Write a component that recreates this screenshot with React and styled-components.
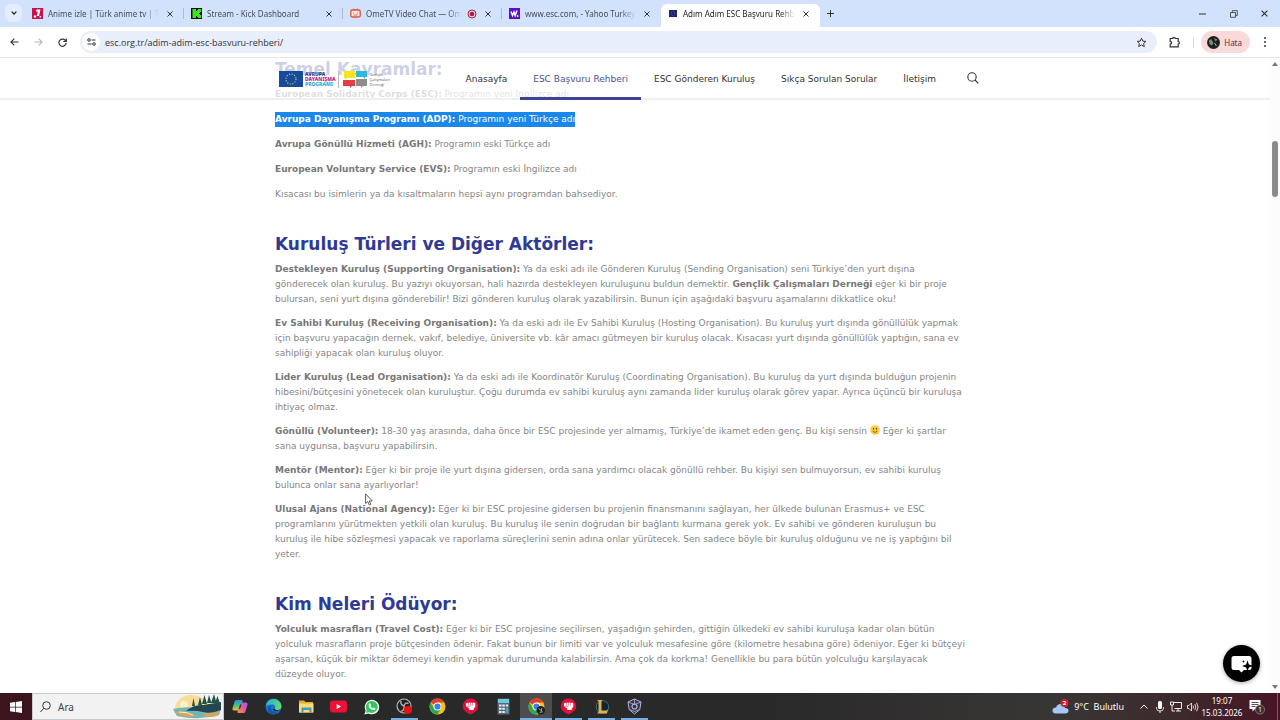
import styled, { createGlobalStyle } from "styled-components";

const GlobalStyle = createGlobalStyle`
  * {
    box-sizing: border-box;
  }
  body {
    margin: 0;
    background: #fff;
  }
  button, input {
    font: inherit;
    color: inherit;
    border: none;
    background: none;
    padding: 0;
    margin: 0;
  }
  svg {
    display: block;
    flex-shrink: 0;
  }
`;

const Screen = styled.div`
  height: 100vh;
  display: flex;
  flex-direction: column;
  overflow: hidden;
  font-family: "Noto Sans", sans-serif;
  font-size: 8px;
  color: #333;
`;

/* browser */

const TabStrip = styled.div`
  height: 27px;
  display: flex;
  align-items: flex-end;
  background: #d3e2fc;
  padding-left: 5px;
`;

const TabSearch = styled.button`
  width: 17px;
  height: 18px;
  margin: 0 3px 5px 0;
  border-radius: 6px;
  background: #e4edfd;
  display: flex;
  align-items: center;
  justify-content: center;
`;

const Tab = styled.div`
  flex: 0 1 159px;
  min-width: 0;
  height: 23px;
  display: flex;
  align-items: center;
  gap: 5px;
  padding: 0 8px 4px 7px;
  position: relative;
  border-radius: 6px 6px 0 0;
  background: ${(p) => (p.$active ? "#fff" : "transparent")};
  color: ${(p) => (p.$active ? "#222" : "#454b57")};
  &::after {
    content: "";
    position: absolute;
    right: 0;
    top: 4px;
    width: 1px;
    height: 11px;
    background: ${(p) => (p.$line ? "#a9bbdc" : "transparent")};
  }
`;

const TabTitle = styled.span`
  flex: 1;
  min-width: 0;
  overflow: hidden;
  white-space: nowrap;
  line-height: 14px;
  mask-image: linear-gradient(90deg, #000 86%, transparent);
`;

const IconButton = styled.button`
  width: ${(p) => p.$w || 12}px;
  height: ${(p) => p.$h || 14}px;
  display: flex;
  align-items: center;
  justify-content: center;
`;

const NewTab = styled(IconButton)`
  margin-bottom: 7px;
`;

const WindowButtons = styled.div`
  margin-left: auto;
  display: flex;
  height: 27px;
`;

const Toolbar = styled.div`
  height: 31px;
  display: flex;
  align-items: center;
  background: #fff;
  border-bottom: 1px solid #e3e5ea;
  padding: 0 0 0 2px;
`;

const Omnibox = styled.label`
  flex: 1;
  height: 22px;
  margin: 0 7px 0 6px;
  padding: 0 7px 0 2px;
  border-radius: 11px;
  background: #e9effa;
  display: flex;
  align-items: center;
  gap: 5px;
`;

const SiteInfo = styled.button`
  width: 18px;
  height: 18px;
  border-radius: 50%;
  background: #fff;
  display: flex;
  align-items: center;
  justify-content: center;
`;

const Address = styled.input`
  flex: 1;
  font-family: "Open Sans", sans-serif;
  font-size: 9px;
  color: #30343b;
  outline: none;
`;

const Divider = styled.span`
  width: 1px;
  height: 11px;
  margin: 0 7px;
  background: #cddaf0;
`;

const Profile = styled.button`
  height: 22px;
  border-radius: 11px;
  padding: 0 8px 0 6px;
  background: #f9dadb;
  color: #6d2a2c;
  display: flex;
  align-items: center;
  gap: 4px;
`;

/* page */

const Viewport = styled.div`
  flex: 1;
  min-height: 0;
  display: flex;
  position: relative;
  overflow: hidden;
  font-family: "DejaVu Sans", Verdana, sans-serif;
  font-size: 9px;
`;

const Page = styled.div`
  flex: 1;
  min-width: 0;
  position: relative;
`;

const SiteHeader = styled.header`
  position: absolute;
  inset: 0 0 auto 0;
  height: 42px;
  background: rgba(255, 255, 255, 0.76);
  border-bottom: 2px solid rgba(238, 238, 238, 0.9);
`;

const HeaderInner = styled.div`
  max-width: 712px;
  height: 42px;
  margin: 0 auto;
  display: flex;
  align-items: stretch;
`;

const Logo = styled.a`
  display: flex;
  align-items: center;
  gap: 2px;
  margin-right: auto;
  text-decoration: none;
`;

const LogoText = styled.span`
  display: flex;
  flex-direction: column;
  font-family: ${(p) => (p.$light ? '"Open Sans"' : '"Noto Sans"')}, sans-serif;
  font-size: ${(p) => (p.$light ? 4 : 5)}px;
  font-weight: ${(p) => (p.$light ? 400 : 800)};
  line-height: 5px;
  color: #555;
`;

const LogoLine = styled.span`
  color: ${(p) => p.$color};
`;

const LogoRule = styled.span`
  width: 1px;
  height: 17px;
  margin-right: 2px;
  background: #bbb;
`;

const Nav = styled.nav`
  display: flex;
`;

const NavLink = styled.a`
  display: flex;
  align-items: center;
  padding: 0 13px;
  white-space: nowrap;
  text-decoration: none;
  color: ${(p) => (p.$active ? "#4b4f9c" : "#333")};
  border-bottom: 3px solid ${(p) => (p.$active ? "#3c4296" : "transparent")};
  border-top: 2px solid transparent;
`;

const SearchButton = styled(IconButton)`
  height: 40px;
  margin: 0 12px 0 18px;
`;

const Article = styled.main`
  max-width: 720px;
  margin: 0 auto;
  color: #858585;
  line-height: 15px;
`;

const Section = styled.section`
  margin-bottom: 31px;
  & p {
    margin-bottom: ${(p) => (p.$loose ? 10 : 9)}px;
  }
`;

const Heading = styled.h2`
  margin: 0 0 7px;
  font-size: 17px;
  line-height: 22px;
  color: #2f3a96;
`;

const Paragraph = styled.p`
  margin: 0;
  white-space: nowrap;
  & b {
    color: #777;
  }
`;

const Selected = styled.mark`
  display: inline-block;
  background: #1a87ec;
  color: #fff;
  & b {
    color: #fff;
  }
`;

const Smile = styled.svg`
  display: inline-block;
  vertical-align: -1px;
`;

const Pointer = styled.svg`
  position: absolute;
  left: 365px;
  top: 435px;
`;

const ChatButton = styled.button`
  position: absolute;
  right: 20px;
  bottom: 11px;
  width: 37px;
  height: 37px;
  border-radius: 50%;
  background: #000;
  box-shadow: 0 1px 4px rgba(0, 0, 0, 0.35);
  display: flex;
  align-items: center;
  justify-content: center;
`;

const Scrollbar = styled.div`
  width: 10px;
  background: #fcfcfc;
  display: flex;
  flex-direction: column;
  align-items: center;
  padding: 4px 0;
`;

const Track = styled.div`
  flex: 1;
  padding-top: 75px;
`;

const Thumb = styled.div`
  width: 6px;
  height: 56px;
  border-radius: 3px;
  background: #8b8b8b;
`;

/* taskbar */

const Taskbar = styled.div`
  height: 27px;
  display: flex;
  background: linear-gradient(90deg, #2a2929 0%, #2a2929 60%, #383635 82%, #3d2a2b 92%, #481426 100%);
  color: #fff;
`;

const StartButton = styled.button`
  width: 32px;
  background: #3c141d;
  display: flex;
  align-items: center;
  justify-content: center;
`;

const SearchBox = styled.label`
  width: 192px;
  background: #f2f2f2;
  border: 1px solid #c9c9c9;
  display: flex;
  align-items: center;
  padding: 0 1px 0 7px;
  gap: 7px;
`;

const SearchInput = styled.input`
  flex: 1;
  min-width: 0;
  font-size: 10px;
  outline: none;
  &::placeholder {
    color: #444;
    opacity: 1;
  }
`;

const AppList = styled.div`
  width: 427px;
  display: grid;
  grid-template-columns: repeat(13, 1fr);
`;

const AppButton = styled.button`
  display: flex;
  align-items: center;
  justify-content: center;
  position: relative;
  background: ${(p) => (p.$active ? "#4d4d4d" : "transparent")};
  &::after {
    content: "";
    position: absolute;
    inset: auto ${(p) => (p.$active ? 0 : 3)}px 0;
    height: 2px;
    background: ${(p) => (p.$open ? "#76aee6" : "transparent")};
  }
`;

const Tray = styled.div`
  margin-left: auto;
  display: flex;
  align-items: center;
  padding-right: 2px;
`;

const Weather = styled.button`
  display: flex;
  align-items: center;
  gap: 5px;
  font-size: 9px;
  white-space: pre;
  margin-right: 12px;
`;

const Clock = styled.div`
  width: 42px;
  text-align: center;
  line-height: 12px;
`;

const TrayEnd = styled.span`
  width: 1px;
  height: 27px;
  background: #7d5a64;
  margin-left: 6px;
`;

const Cross = ({ size = 6 }) => (
  <svg width={size} height={size} viewBox="0 0 6 6" stroke="#333" strokeWidth="1">
    <path d="M.5 .5l5 5M5.5 .5l-5 5" />
  </svg>
);

const tabs = [
  {
    title: "Anime izle | Türk anime tv | Türkçe",
    icon: (
      <svg width="11" height="11" viewBox="0 0 11 11">
        <rect width="11" height="11" fill="#c8124b" />
        <path d="M4.500 1.500h4L7 8H4.800L5.800 3.500H4zM2 7.500h2.300L4 9.500H1.600zM7.600 8h1.500v1.500H7.600z" fill="#fff" />
      </svg>
    ),
    line: true,
  },
  {
    title: "Stream - Kick Dashboard",
    icon: (
      <svg width="11" height="11" viewBox="0 0 11 11">
        <rect width="11" height="11" fill="#111" />
        <path d="M1.500 1h3.500v2H6V2h1V1h3v3H9v1H8v1h1v1h1v3H7V9H6V8H5v2H1.500z" fill="#3ee51c" />
      </svg>
    ),
    line: true,
  },
  {
    title: "OmeTV Video Chat — OmeTV",
    icon: (
      <svg width="11" height="11" viewBox="0 0 11 11" fill="none" stroke="#d9533c">
        <rect x=".8" y="2" width="9.400" height="7" rx="1.500" strokeWidth="1.300" fill="#fbe6df" />
        <path d="M3.500 .5l1.500 1.500M7.500 .5L6 2M3 5h1M7 5h1M3.500 7h4" strokeWidth=".8" />
      </svg>
    ),
    recording: true,
    line: true,
  },
  {
    title: "www.esc.com, - Yahoo Turkey Arama",
    icon: (
      <svg width="11" height="11" viewBox="0 0 11 11">
        <rect width="11" height="11" fill="#5a10c8" />
        <path d="M2 3.500l1.500 4L5 4l1.200 3.500L8 2.500" fill="none" stroke="#fff" strokeWidth="1.500" />
        <circle cx="8.700" cy="8" r=".9" fill="#fff" />
      </svg>
    ),
  },
  {
    title: "Adım Adım ESC Başvuru Rehberi",
    icon: (
      <svg width="10" height="11" viewBox="0 0 10 11">
        <rect x="1" y="2" width="8" height="7" fill="#1d2374" />
        <circle cx="5" cy="5.500" r="2" fill="none" stroke="#7378a0" strokeWidth=".7" strokeDasharray=".7 .7" />
      </svg>
    ),
    active: true,
  },
];

const ChromeLogo = ({ children }) => (
  <svg width="17" height="17" viewBox="0 0 16 16">
    <circle cx="8" cy="8" r="7.500" fill="#fbc116" />
    <path d="M8 8L1.500 4.250A7.500 7.500 0 0 1 14.500 4.250H8z" fill="#e33b2e" />
    <path d="M1.500 4.250A7.500 7.500 0 0 0 8 15.500L11.200 9.800 8 8 4.800 9.800z" fill="#2da94f" />
    <circle cx="8" cy="8" r="3.700" fill="#fff" />
    <circle cx="8" cy="8" r="2.900" fill="#3f7fe8" />
    {children}
  </svg>
);

const FistLogo = () => (
  <svg width="17" height="17" viewBox="0 0 17 17">
    <path d="M8.500 .6a7.800 7.600 0 0 1 6.500 11.600Q12 15 8.500 16.400 5 15 2 12.200A7.800 7.600 0 0 1 8.500 .6z" fill="#e0123c" />
    <path d="M3.800 5.500l2.200-.8h6.500l.8.700v3.400l-1.300 1.400-.4 1.800H7.200L6.800 10 4.300 8.500z" fill="#fff" />
    <path d="M6.400 5v2.500M8.500 4.700v2.800M10.600 4.700v2.800M5 8.300h3.500" stroke="#e0123c" strokeWidth=".5" />
  </svg>
);

const apps = [
  {
    name: "Copilot",
    icon: (
      <svg width="16" height="15" viewBox="0 0 16 15">
        <defs>
          <linearGradient id="cpa" x1="0" y1="0" x2="0" y2="1">
            <stop offset="0" stopColor="#2c8df0" />
            <stop offset=".5" stopColor="#36c486" />
            <stop offset="1" stopColor="#f0c22c" />
          </linearGradient>
          <linearGradient id="cpb" x1="1" y1="0" x2="0" y2="1">
            <stop offset="0" stopColor="#9b5cf2" />
            <stop offset=".5" stopColor="#e7569c" />
            <stop offset="1" stopColor="#f79a3e" />
          </linearGradient>
        </defs>
        <path d="M4.500 1h5q1.500 0 1 1.500L8 10q-.5 1.500-2 1.500H2Q0 11.500.6 9L2.600 2.500Q3 1 4.500 1z" fill="url(#cpa)" />
        <path d="M11.500 14h-5Q5 14 5.500 12.500L8 5q.5-1.500 2-1.500h4q2 0 1.400 2.500l-2 6.500q-.4 1.500-1.900 1.500z" fill="url(#cpb)" />
        <path d="M8.800 5.500L7.400 9.800" stroke="#333" strokeWidth="1.300" />
      </svg>
    ),
  },
  {
    name: "Edge",
    icon: (
      <svg width="17" height="17" viewBox="0 0 17 17">
        <defs>
          <linearGradient id="edg" x1="0" y1="0" x2="1" y2=".4">
            <stop offset="0" stopColor="#28a8e6" />
            <stop offset="1" stopColor="#5fdc6c" />
          </linearGradient>
        </defs>
        <circle cx="8.500" cy="8.500" r="8" fill="#1673cf" />
        <path d="M.6 8A8 8 0 0 1 16.500 8.500c0 2.500-2 3.500-4 3.500-2 0-3-.8-2.600-1.600.8-1.200.4-3.900-2.600-3.900C4.500 6.500 1.500 7 .6 8z" fill="url(#edg)" />
        <path d="M5.800 9.500c0 4 3.500 5.500 7.500 4-2 3-5.500 3.500-8 2.200C1.500 13 2.500 8 6.800 7.500c-.7.500-1 1.200-1 2z" fill="#1557a8" />
        <path d="M9.800 10.600c-.5.800.7 1.500 2.700 1.400 1.500 0 2.500-.5 3.500-1.300-1.500 2.800-7.500 3.500-8.500.6z" fill="#292929" />
      </svg>
    ),
  },
  {
    name: "Dosya Gezgini",
    icon: (
      <svg width="15" height="13" viewBox="0 0 15 13">
        <path d="M0 .5h5l1.500 1.500H14v10.500H0z" fill="#e8a932" />
        <path d="M0 3.500h14.500v9H0z" fill="#fbdc74" />
        <path d="M2.500 7.500h10v5H10.500V10h-6v2.500h-2z" fill="#3f9ad3" />
      </svg>
    ),
  },
  {
    name: "YouTube",
    icon: (
      <svg width="17" height="13" viewBox="0 0 17 13">
        <rect y=".5" width="17" height="12" rx="3" fill="#ee1136" />
        <path d="M6.700 4v5l4.300-2.500z" fill="#fff" />
      </svg>
    ),
  },
  {
    name: "WhatsApp",
    icon: (
      <svg width="16" height="16" viewBox="0 0 16 16">
        <path d="M.5 15.500L1.600 11.500A7.200 7.200 0 1 1 4.500 14.400z" fill="#fff" />
        <path d="M2 14l.7-2.800A6 6 0 1 1 5 13.300z" fill="#35c45c" />
        <path d="M5.200 4.500l1-.1.900 1.900-.6.900q.8 1.500 2.200 2.100l.9-.9 1.900.9q0 1.800-1.800 1.900Q5 10.500 4.600 6q0-1 .6-1.500z" fill="#fff" />
      </svg>
    ),
  },
  {
    name: "OBS",
    open: true,
    icon: (
      <svg width="17" height="17" viewBox="0 0 17 17">
        <circle cx="8" cy="8" r="7" fill="#222" stroke="#b9b9b9" strokeWidth="1.200" />
        <path d="M8 8Q4 6.500 5 3M8 8q1-4 4.500-2.500M8 8q1 4-3 5.500" fill="none" stroke="#aaa" strokeWidth="1.500" />
        <circle cx="12" cy="12" r="4" fill="#ec1010" />
      </svg>
    ),
  },
  { name: "Chrome", icon: <ChromeLogo /> },
  { name: "Riot", icon: <FistLogo /> },
  {
    name: "Hesap Makinesi",
    icon: (
      <svg width="13" height="17" viewBox="0 0 13 17">
        <rect x=".5" y=".5" width="12" height="16" fill="#5b666d" />
        <rect x="1" y="1" width="11" height="4" fill="#68cbe0" />
        <path d="M2 6.500h2.500v2H2zM5.300 6.500h2.500v2H5.300zM2 9.700h2.500v2H2zM5.300 9.700h2.500v2H5.300zM2 13h2.500v2H2zM5.300 13h2.500v2H5.300zM8.700 6.500h2.500v2H8.700z" fill="#e5edf0" />
        <path d="M8.700 9.700h2.500V15H8.700z" fill="#4aa0d8" />
      </svg>
    ),
  },
  {
    name: "Chrome profili",
    open: true,
    active: true,
    icon: (
      <ChromeLogo>
        <circle cx="12" cy="11.500" r="4" fill="#1b1b1b" />
        <path d="M10 10l2 1.500M13 9.500l-.5 3M11 13.500l3-.5" stroke="#b6bab4" strokeWidth=".9" />
      </ChromeLogo>
    ),
  },
  { name: "Riot Client", open: true, icon: <FistLogo /> },
  {
    name: "League of Legends",
    open: true,
    icon: (
      <svg width="16" height="16" viewBox="0 0 16 16">
        <circle cx="8.500" cy="8" r="6.300" fill="#13252d" stroke="#36707c" />
        <path d="M3 1h5.500L7.500 2.500v9h5L14 10l-1 4.500H3L4.500 13V2.500z" fill="#dcae55" />
      </svg>
    ),
  },
  {
    name: "Oyun",
    open: true,
    icon: (
      <svg width="17" height="17" viewBox="0 0 17 17" fill="none" stroke="#b4b4d6">
        <path d="M8.500 1l6.500 3-1.200 7.500L8.500 16l-5.300-4.500L2 4z" fill="#34344d" />
        <path d="M2 4l6.500 2.500L15 4M8.500 1v5.500M3.200 11.500l5.300 2 5.300-2" strokeWidth=".8" />
        <circle cx="8.500" cy="8.500" r="2.500" strokeWidth="1.200" />
      </svg>
    ),
  },
];

const App = () => {
  return (
    <Screen>
      <GlobalStyle />
      <TabStrip>
        <TabSearch aria-label="Sekmelerde ara">
          <svg width="6" height="4" viewBox="0 0 6 4" fill="none" stroke="#222" strokeWidth="1.300">
            <path d="M.6 .6L3 3 5.400 .6" />
          </svg>
        </TabSearch>
        {tabs.map((t) => (
          <Tab key={t.title} $active={t.active} $line={t.line}>
            {t.icon}
            <TabTitle>{t.title}</TabTitle>
            {t.recording && (
              <svg width="10" height="10" viewBox="0 0 10 10">
                <circle cx="5" cy="5" r="4" fill="none" stroke="#b3173a" />
                <circle cx="5" cy="5" r="2.300" fill="#b3173a" />
              </svg>
            )}
            <IconButton aria-label="Kapat">
              <Cross />
            </IconButton>
          </Tab>
        ))}
        <NewTab $w={20} aria-label="Yeni sekme">
          <svg width="7" height="7" viewBox="0 0 7 7" stroke="#333">
            <path d="M3.500 0v7M0 3.500h7" />
          </svg>
        </NewTab>
        <WindowButtons>
          <IconButton $w={31} $h={27} aria-label="Simge durumuna küçült">
            <svg width="7" height="2" viewBox="0 0 7 2" stroke="#333">
              <path d="M0 1h7" />
            </svg>
          </IconButton>
          <IconButton $w={31} $h={27} aria-label="Önceki boyut">
            <svg width="8" height="8" viewBox="0 0 8 8" fill="none" stroke="#333" strokeWidth=".8">
              <path d="M.5 2.500h5v4.800h-5zM2.300 2.300V.6h5v4.800H5.700" />
            </svg>
          </IconButton>
          <IconButton $w={31} $h={27} aria-label="Pencereyi kapat">
            <Cross size={7} />
          </IconButton>
        </WindowButtons>
      </TabStrip>

      <Toolbar>
        <IconButton $w={24} aria-label="Geri">
          <svg width="9" height="8" viewBox="0 0 9 8" fill="none" stroke="#333" strokeWidth="1.100">
            <path d="M8.500 4H1M4.300 .6L.9 4l3.400 3.400" />
          </svg>
        </IconButton>
        <IconButton $w={24} aria-label="İleri">
          <svg width="9" height="8" viewBox="0 0 9 8" fill="none" stroke="#b5b5b5" strokeWidth="1.100">
            <path d="M.5 4H8M4.700 .6L8.100 4 4.700 7.400" />
          </svg>
        </IconButton>
        <IconButton $w={24} aria-label="Yenile">
          <svg width="9" height="9" viewBox="0 0 9 9" fill="none" stroke="#333" strokeWidth="1.200">
            <path d="M7.800 3.200A3.600 3.600 0 1 0 8.100 5M8.300 .5v3H5.300" />
          </svg>
        </IconButton>
        <Omnibox>
          <SiteInfo aria-label="Site bilgileri">
            <svg width="9" height="8" viewBox="0 0 9 8" fill="none" stroke="#333">
              <circle cx="2" cy="2" r="1.300" />
              <path d="M4.500 2h4M.5 6h4" />
              <circle cx="7" cy="6" r="1.300" />
            </svg>
          </SiteInfo>
          <Address aria-label="Adres" defaultValue="esc.org.tr/adim-adim-esc-basvuru-rehberi/" />
          <IconButton $w={18} aria-label="Yer işareti">
            <svg width="11" height="11" viewBox="0 0 11 11" fill="none" stroke="#333">
              <path d="M5.500 1.200l1.300 2.900 3.100.3-2.300 2.100.7 3.100-2.800-1.600-2.800 1.600.7-3.100L1.100 4.400l3.100-.3z" />
            </svg>
          </IconButton>
        </Omnibox>
        <IconButton $w={22} aria-label="Uzantılar">
          <svg width="12" height="12" viewBox="0 0 12 12" fill="none" stroke="#333" strokeWidth="1.200">
            <path d="M1.200 2.500h2.600a1.200 1.200 0 0 1 2.400 0h3v3a1.200 1.200 0 0 1 0 2.400v3h-8V8.200a1.400 1.400 0 0 0 0-2.800z" />
          </svg>
        </IconButton>
        <Divider />
        <Profile>
          <svg width="13" height="13" viewBox="0 0 13 13">
            <circle cx="6.500" cy="6.500" r="6.500" fill="#1d211d" />
            <path d="M2 4.500L4 3l2.500 4L5 9.500 2.500 8zM7 2l3.500 1.500-2 2z" fill="#7d8a80" />
            <path d="M7.500 7l2 3" stroke="#aab1a8" />
          </svg>
          Hata
        </Profile>
        <IconButton $w={30} aria-label="Menü">
          <svg width="2" height="10" viewBox="0 0 2 10" fill="#333">
            <circle cx="1" cy="1" r="1" />
            <circle cx="1" cy="5" r="1" />
            <circle cx="1" cy="9" r="1" />
          </svg>
        </IconButton>
      </Toolbar>

      <Viewport>
        <Page>
          <Article>
            <Section $loose>
              <Heading>Temel Kavramlar:</Heading>
              <Paragraph>
                <b>European Solidarity Corps (ESC):</b> Programın yeni İngilizce adı
              </Paragraph>
              <Paragraph>
                <Selected>
                  <b>Avrupa Dayanışma Programı (ADP):</b> Programın yeni Türkçe adı
                </Selected>
              </Paragraph>
              <Paragraph>
                <b>Avrupa Gönüllü Hizmeti (AGH):</b> Programın eski Türkçe adı
              </Paragraph>
              <Paragraph>
                <b>European Voluntary Service (EVS):</b> Programın eski İngilizce adı
              </Paragraph>
              <Paragraph>Kısacası bu isimlerin ya da kısaltmaların hepsi aynı programdan bahsediyor.</Paragraph>
            </Section>

            <Section>
              <Heading>Kuruluş Türleri ve Diğer Aktörler:</Heading>
              <Paragraph>
                <b>Destekleyen Kuruluş (Supporting Organisation):</b> Ya da eski adı ile Gönderen Kuruluş (Sending
                Organisation) seni Türkiye’den yurt dışına
                <br />
                gönderecek olan kuruluş. Bu yazıyı okuyorsan, hali hazırda destekleyen kuruluşunu buldun demektir.{" "}
                <b>Gençlik Çalışmaları Derneği</b> eğer ki bir proje
                <br />
                bulursan, seni yurt dışına gönderebilir! Bizi gönderen kuruluş olarak yazabilirsin. Bunun için aşağıdaki
                başvuru aşamalarını dikkatlice oku!
              </Paragraph>
              <Paragraph>
                <b>Ev Sahibi Kuruluş (Receiving Organisation):</b> Ya da eski adı ile Ev Sahibi Kuruluş (Hosting
                Organisation). Bu kuruluş yurt dışında gönüllülük yapmak
                <br />
                için başvuru yapacağın dernek, vakıf, belediye, üniversite vb. kâr amacı gütmeyen bir kuruluş olacak.
                Kısacası yurt dışında gönüllülük yaptığın, sana ev
                <br />
                sahipliği yapacak olan kuruluş oluyor.
              </Paragraph>
              <Paragraph>
                <b>Lider Kuruluş (Lead Organisation):</b> Ya da eski adı ile Koordinatör Kuruluş (Coordinating
                Organisation). Bu kuruluş da yurt dışında bulduğun projenin
                <br />
                hibesini/bütçesini yönetecek olan kuruluştur. Çoğu durumda ev sahibi kuruluş aynı zamanda lider kuruluş
                olarak görev yapar. Ayrıca üçüncü bir kuruluşa
                <br />
                ihtiyaç olmaz.
              </Paragraph>
              <Paragraph>
                <b>Gönüllü (Volunteer):</b> 18-30 yaş arasında, daha önce bir ESC projesinde yer almamış, Türkiye’de
                ikamet eden genç. Bu kişi sensin{" "}
                <Smile width="10" height="10" viewBox="0 0 10 10" role="img" aria-label="gülümseme">
                  <circle cx="5" cy="5" r="4.800" fill="#fbcb3c" />
                  <ellipse cx="3.500" cy="3.700" rx=".6" ry="1" fill="#5b3c12" />
                  <ellipse cx="6.500" cy="3.700" rx=".6" ry="1" fill="#5b3c12" />
                  <path d="M2.800 6.300Q5 8.500 7.200 6.300" fill="none" stroke="#5b3c12" strokeWidth=".8" />
                </Smile>{" "}
                Eğer ki şartlar
                <br />
                sana uygunsa, başvuru yapabilirsin.
              </Paragraph>
              <Paragraph>
                <b>Mentör (Mentor):</b> Eğer ki bir proje ile yurt dışına gidersen, orda sana yardımcı olacak gönüllü
                rehber. Bu kişiyi sen bulmuyorsun, ev sahibi kuruluş
                <br />
                bulunca onlar sana ayarlıyorlar!
              </Paragraph>
              <Paragraph>
                <b>Ulusal Ajans (National Agency):</b> Eğer ki bir ESC projesine gidersen bu projenin finansmanını
                sağlayan, her ülkede bulunan Erasmus+ ve ESC
                <br />
                programlarını yürütmekten yetkili olan kuruluş. Bu kuruluş ile senin doğrudan bir bağlantı kurmana gerek
                yok. Ev sahibi ve gönderen kuruluşun bu
                <br />
                kuruluş ile hibe sözleşmesi yapacak ve raporlama süreçlerini senin adına onlar yürütecek. Sen sadece
                böyle bir kuruluş olduğunu ve ne iş yaptığını bil
                <br />
                yeter.
              </Paragraph>
            </Section>

            <Section>
              <Heading>Kim Neleri Ödüyor:</Heading>
              <Paragraph>
                <b>Yolculuk masrafları (Travel Cost):</b> Eğer ki bir ESC projesine seçilirsen, yaşadığın şehirden,
                gittiğin ülkedeki ev sahibi kuruluşa kadar olan bütün
                <br />
                yolculuk masrafların proje bütçesinden ödenir. Fakat bunun bir limiti var ve yolculuk mesafesine göre
                (kilometre hesabına göre) ödeniyor. Eğer ki bütçeyi
                <br />
                aşarsan, küçük bir miktar ödemeyi kendin yapmak durumunda kalabilirsin. Ama çok da korkma! Genellikle bu
                para bütün yolculuğu karşılayacak
                <br />
                düzeyde oluyor.
              </Paragraph>
            </Section>
          </Article>

          <SiteHeader>
            <HeaderInner>
              <Logo href="#" aria-label="Avrupa Dayanışma Programı">
                <svg width="24" height="16" viewBox="0 0 24 16">
                  <rect width="24" height="16" fill="#174a9c" />
                  <circle cx="12" cy="8" r="5" fill="none" stroke="#c9cf62" strokeWidth="1.200" strokeDasharray="1.100 1.518" />
                </svg>
                <LogoText>
                  <LogoLine $color="#25307f">AVRUPA</LogoLine>
                  <LogoLine $color="#b5127f">DAYANIŞMA</LogoLine>
                  <LogoLine $color="#2aa9dc">PROGRAMI</LogoLine>
                </LogoText>
                <LogoRule />
                <svg width="25" height="19" viewBox="0 0 25 19">
                  <path d="M1 1h11v7H4l-2 2V8H1z" fill="#f6e51f" />
                  <path d="M13 1h11v6h-2v2l-2-2h-7z" fill="#33b5e2" />
                  <path d="M0 10h12v6H9l-2 2v-2H0z" fill="#e33f49" />
                  <path d="M13 9h11v7h-4l-2 2v-2h-5z" fill="#8d8d8d" />
                </svg>
                <LogoText $light>
                  <span>Gençlik</span>
                  <span>Çalışmaları</span>
                  <span>Derneği</span>
                </LogoText>
              </Logo>
              <Nav>
                <NavLink href="#">Anasayfa</NavLink>
                <NavLink href="#" $active>
                  ESC Başvuru Rehberi
                </NavLink>
                <NavLink href="#">ESC Gönderen Kuruluş</NavLink>
                <NavLink href="#">Sıkça Sorulan Sorular</NavLink>
                <NavLink href="#">İletişim</NavLink>
              </Nav>
              <SearchButton aria-label="Ara">
                <svg width="12" height="12" viewBox="0 0 12 12" fill="none" stroke="#333" strokeWidth="1.100">
                  <circle cx="5" cy="5" r="4.200" />
                  <path d="M8 8l3.300 3.300" />
                </svg>
              </SearchButton>
            </HeaderInner>
          </SiteHeader>

          <Pointer width="8" height="13" viewBox="0 0 8 13">
            <path d="M.6 .8v9.700l2.200-2 1.500 3.500 1.500-.7-1.500-3.300h3z" fill="#fff" stroke="#333" strokeWidth=".8" />
          </Pointer>
        </Page>

        <Scrollbar>
          <svg width="6" height="4" viewBox="0 0 6 4" fill="#777">
            <path d="M0 4l3-4 3 4z" />
          </svg>
          <Track>
            <Thumb />
          </Track>
          <svg width="6" height="4" viewBox="0 0 6 4" fill="#777">
            <path d="M0 0l3 4 3-4z" />
          </svg>
        </Scrollbar>

        <ChatButton aria-label="Sohbet">
          <svg width="22" height="18" viewBox="0 0 22 18">
            <path d="M3 1h15q2.500 0 2.500 2.500v9Q20.500 15 18 15h-5l-2.500 2.500L8 15H3Q.5 15 .5 12.500v-9Q.5 1 3 1z" fill="#fff" />
            <path d="M16.500 5.500l1.400 4.100 4.100 1.400-4.100 1.400-1.400 4.100-1.400-4.100L11 11l4.100-1.400z" fill="#000" />
            <path d="M12.500 5l.4 1.100 1.100.4-1.100.4-.4 1.100-.4-1.100-1.100-.4 1.100-.4z" fill="#000" />
          </svg>
        </ChatButton>
      </Viewport>

      <Taskbar>
        <StartButton aria-label="Başlat">
          <svg width="12" height="12" viewBox="0 0 12 12" fill="#fff">
            <path d="M0 1.700l5-.7v4.700H0zM5.700 .9L12 0v5.700H5.700zM0 6.400h5v4.700l-5-.8zM5.700 6.400H12V12l-6.300-.9z" />
          </svg>
        </StartButton>
        <SearchBox>
          <svg width="11" height="12" viewBox="0 0 11 12" fill="none" stroke="#333">
            <circle cx="6.500" cy="4.500" r="3.800" />
            <path d="M3.800 7.300L.4 11" />
          </svg>
          <SearchInput aria-label="Ara" placeholder="Ara" />
          <svg width="50" height="25" viewBox="0 0 50 25">
            <path d="M3 17Q2 6 13 2q10-3 20 4l10 10z" fill="#f8dc9a" />
            <circle cx="12" cy="11" r="4" fill="#fdf0c4" />
            <path d="M1 15q12-3 24-1t24 1l-2 6q-20 6-42 1z" fill="#6fb7b5" />
            <path d="M14 17q8-7 17-6l18-3v8q-10 4-18 2t-17-1z" fill="#25464f" />
            <path d="M26 11l2-8 2 8zM30 10l2.500-9L35 10zM35 9l2-8 2.500 8zM39 9l3-9 2.500 9zM43 9l2.500-7L49 13zM20 12l1.500-8L23 12z" fill="#1f5148" />
            <path d="M2 18q10-2 15 1t10 2l-8 2q-9 0-17-5zM34 19q8 1 14-2l-3 5q-8 2-15 0z" fill="#d9a45c" />
            <path d="M7 18q9 0 14 3" stroke="#dff3ee" fill="none" />
          </svg>
        </SearchBox>
        <AppList>
          {apps.map((a) => (
            <AppButton key={a.name} aria-label={a.name} $open={a.open} $active={a.active}>
              {a.icon}
            </AppButton>
          ))}
        </AppList>
        <Tray>
          <Weather>
            <svg width="17" height="15" viewBox="0 0 17 15">
              <path d="M4 14.500Q.5 14.500.5 11.500T4 8.500Q5 5 8.500 5t4.500 4q3.500 0 3.500 2.700T13 14.500z" fill="#a6c8f4" />
              <circle cx="12.500" cy="4" r="4" fill="#d3202f" />
              <text x="12.500" y="6" textAnchor="middle" fontSize="6" fontWeight="700" fill="#fff">
                2
              </text>
            </svg>
            {"9°C  Bulutlu"}
          </Weather>
          <IconButton $w={16} aria-label="Gizli simgeler">
            <svg width="8" height="5" viewBox="0 0 8 5" fill="none" stroke="#fff">
              <path d="M.5 4.500L4 1l3.500 3.500" />
            </svg>
          </IconButton>
          <IconButton $w={15} aria-label="Mikrofon">
            <svg width="8" height="12" viewBox="0 0 8 12" fill="#fff">
              <rect x="2" width="4" height="8" rx="1.500" />
              <path d="M.5 6v1.500Q.5 10 4 10t3.500-2.500V6" fill="none" stroke="#fff" strokeWidth=".8" />
              <path d="M3.500 10h1v2h-1z" />
            </svg>
          </IconButton>
          <IconButton $w={17} aria-label="Ağ">
            <svg width="12" height="11" viewBox="0 0 12 11" fill="none" stroke="#fff" strokeWidth=".9">
              <path d="M4 1.500h7.500v6H4.500M6 10h5M8 7.500V10M.5 1h3v3h-3zM2 4v6h3" />
            </svg>
          </IconButton>
          <IconButton $w={17} aria-label="Ses">
            <svg width="12" height="10" viewBox="0 0 12 10" fill="none" stroke="#fff" strokeWidth=".8">
              <path d="M.5 3.500H2L4.500 1v8L2 6.500H.5zM6 3.500q1 1.500 0 3M7.800 2q2 3 0 6M9.600 .7q3 4.300 0 8.600" />
            </svg>
          </IconButton>
          <Clock>
            <div>19:07</div>
            <div>15.03.2026</div>
          </Clock>
          <IconButton $w={28} $h={27} aria-label="Bildirimler">
            <svg width="16" height="17" viewBox="0 0 16 17">
              <path d="M.5 2h11v9H6l-2.500 2.500V11h-3z" fill="#fff" />
              <path d="M2.500 4.500h7M2.500 6.500h7M2.500 8.500h4" stroke="#4a2029" strokeWidth=".8" />
              <circle cx="11" cy="11.500" r="4.500" fill="#3a3033" stroke="#999" strokeWidth=".7" />
              <text x="11" y="14" textAnchor="middle" fontSize="7" fill="#fff">
                1
              </text>
            </svg>
          </IconButton>
          <TrayEnd />
        </Tray>
      </Taskbar>
    </Screen>
  );
};

export default App;
